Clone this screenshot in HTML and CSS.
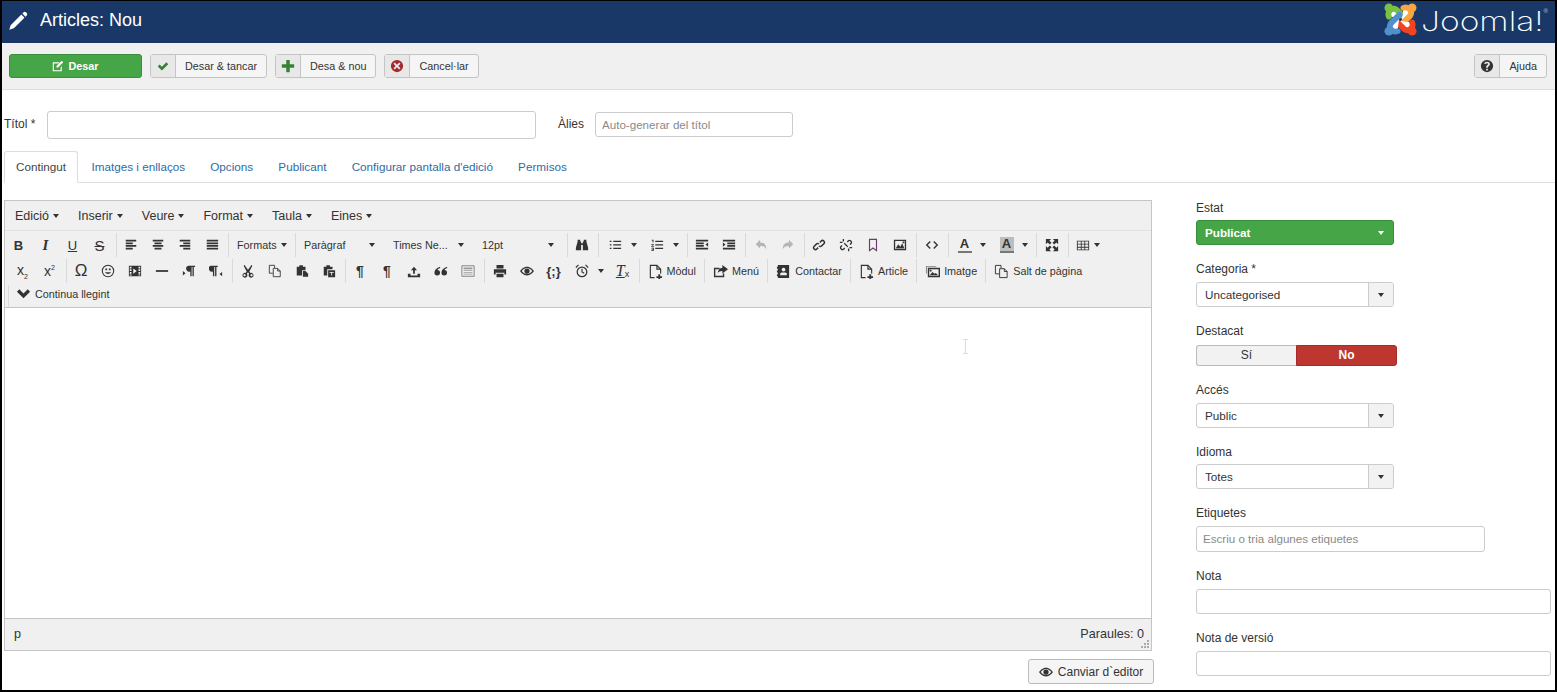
FILE: index.html
```html
<!DOCTYPE html>
<html lang="ca">
  <head>
    <meta charset="UTF-8" />
    <title>Articles: Nou</title>
    <link rel="stylesheet" href="styles.css">
  </head>
  <body>
    <svg class="sprite" width="0" height="0">
      <symbol id="i-left" viewBox="0 0 16 16"><path d="M2 2h12v2H2zM2 5h8v2H2zM2 8h12v2H2zM2 11h8v2H2z"/></symbol>
      <symbol id="i-center" viewBox="0 0 16 16"><path d="M2 2h12v2H2zM4 5h8v2H4zM2 8h12v2H2zM4 11h8v2H4z"/></symbol>
      <symbol id="i-right" viewBox="0 0 16 16"><path d="M2 2h12v2H2zM6 5h8v2H6zM2 8h12v2H2zM6 11h8v2H6z"/></symbol>
      <symbol id="i-justify" viewBox="0 0 16 16"><path d="M2 2h13v2H2zM2 5h13v2H2zM2 8h13v2H2zM2 11h13v2H2z"/></symbol>
      <symbol id="i-binoc" viewBox="0 0 16 16"><path d="M3 2h3v2h1v2h2V4h1V2h3v2l2 7v3H9V8H7v6H1v-3l2-7z"/></symbol>
      <symbol id="i-bullist" viewBox="0 0 16 16"><path d="M6 3h9v1.500H6zM6 7h9v1.500H6zM6 11h9v1.500H6zM2 3h2v1.500H2zM2 7h2v1.500H2zM2 11h2v1.500H2z"/></symbol>
      <symbol id="i-numlist" viewBox="0 0 16 16"><path d="M6 3h9v1.500H6zM6 7h9v1.500H6zM6 11h9v1.500H6zM2 2h2v3H3V3H2zM1.500 7h3v1l-2 1h2v1h-3V9l2-1h-2zM1.500 11h3v3.500h-3v-1h2v-.5h-1v-.5h1v-.5h-2z"/></symbol>
      <symbol id="i-outdent" viewBox="0 0 16 16"><path d="M1 2h14v2H1zM1 5h9v2H1zM1 8h9v2H1zM1 11h14v2H1zM15 5v5l-3-2.500z"/></symbol>
      <symbol id="i-indent" viewBox="0 0 16 16"><path d="M1 2h14v2H1zM6 5h9v2H6zM6 8h9v2H6zM1 11h14v2H1zM1 5v5l3-2.500z"/></symbol>
      <symbol id="i-undo" viewBox="0 0 16 16"><path d="M7 2v3c5 0 7 3 7 8-1.500-3-3-4-7-4v3L2 7z"/></symbol>
      <symbol id="i-redo" viewBox="0 0 16 16"><path d="M9 2v3c-5 0-7 3-7 8 1.500-3 3-4 7-4v3l5-5z"/></symbol>
      <symbol id="i-link" viewBox="0 0 16 16"><path d="M7 11l-1.500 1.500a2 2 0 0 1-3-3L5 7a2 2 0 0 1 3 0M9 5l1.500-1.500a2 2 0 0 1 3 3L11 9a2 2 0 0 1-3 0" fill="none" stroke="currentColor" stroke-width="1.700"/></symbol>
      <symbol id="i-unlink" viewBox="0 0 16 16"><path d="M6.500 11.500l-1 1a2 2 0 0 1-3-3l1-1M9.500 4.500l1-1a2 2 0 0 1 3 3l-1 1M5 1v3M1 5h3M11 15v-3M15 11h-3M6 6l4 4" fill="none" stroke="currentColor" stroke-width="1.500"/></symbol>
      <symbol id="i-bookmark" viewBox="0 0 16 16"><path d="M4 1.500h8v13l-4-3-4 3z" fill="none" stroke="#6b3a6e" stroke-width="1.300"/></symbol>
      <symbol id="i-image" viewBox="0 0 16 16"><path d="M1 2h14v12H1zm1.500 1.500v9h11v-9z"/><path d="M3 12l3-5 2.500 3 2-4 2.500 6zM11 4h2v2h-2z"/></symbol>
      <symbol id="i-code" viewBox="0 0 16 16"><path d="M6 4L2 8l4 4M10 4l4 4-4 4" fill="none" stroke="currentColor" stroke-width="1.600"/></symbol>
      <symbol id="i-full" viewBox="0 0 16 16"><path d="M1 1h6L5 3l2.500 2.500-2 2L3 5 1 7zM15 1v6l-2-2-2.500 2.500-2-2L11 3 9 1zM1 15V9l2 2 2.500-2.500 2 2L5 13l2 2zM15 15H9l2-2-2.500-2.500 2-2L13 11l2-2z"/></symbol>
      <symbol id="i-table" viewBox="0 0 16 16"><path d="M1 3h14v11H1zm1 1v2.500h3.500V4zm4.500 0v2.500h3V4zm4 0v2.500H14V4zM2 7.500V10h3.500V7.500zm4.500 0V10h3V7.500zm4 0V10H14V7.500zM2 11v2h3.500v-2zm4.500 0v2h3v-2zm4 0v2H14v-2z"/></symbol>
      <symbol id="i-smile" viewBox="0 0 16 16"><circle cx="8" cy="8" r="6.500" fill="none" stroke="currentColor" stroke-width="1.200"/><path d="M5 5h2v2H5zM9 5h2v2H9zM4.500 9.500c2 2.500 5 2.500 7 0" fill="currentColor"/></symbol>
      <symbol id="i-media" viewBox="0 0 16 16"><path d="M1 2h14v12H1zm1 1v2h2V3zm0 3v2h2V6zm0 3v2h2V9zm0 3v1h2v-1zM12 3v2h2V3zm0 3v2h2V6zm0 3v2h2V9zm0 3v1h2v-1zM6 5v6l4-3z" fill-rule="evenodd"/></symbol>
      <symbol id="i-hr" viewBox="0 0 16 16"><path d="M1 7h14v2H1z"/></symbol>
      <symbol id="i-ltr" viewBox="0 0 16 16"><path d="M7 2h8v1.500h-1.500V14H12V3.500h-1V14H9.500V8.500A3.300 3.300 0 0 1 7 2zM1 8l3 2.500L1 13z"/></symbol>
      <symbol id="i-rtl" viewBox="0 0 16 16"><path d="M2 2h8v1.500H8.500V14H7V3.500H6V14H4.500V8.500A3.300 3.300 0 0 1 2 2zM15 9v5l-3-2.500z"/></symbol>
      <symbol id="i-cut" viewBox="0 0 16 16"><path d="M4 1l4 5.500L12 1l1 1-3.500 6.500 1.300 1.700a2.800 2.800 0 1 1-1.500 1L8 9.500l-1.300 1.700a2.800 2.800 0 1 1-1.500-1l1.300-1.700L3 2zM4 11.500a1.300 1.300 0 1 0 .1 0zM12 11.500a1.300 1.300 0 1 0 .1 0z" fill-rule="evenodd"/></symbol>
      <symbol id="i-copy" viewBox="0 0 16 16"><path d="M1.500 1.500h6v3M1.500 1.500v9h4M6 5h5l3 3v6.500H6zM11 5v3h3" fill="none" stroke="currentColor"/></symbol>
      <symbol id="i-paste" viewBox="0 0 16 16"><path d="M2 3h3V1.500h4V3h3v4H8v6H2zM9 8h3l3 3v3.500H9z"/></symbol>
      <symbol id="i-pastetext" viewBox="0 0 16 16"><path d="M2 3h3V1.500h4V3h3v3H6v7H2z"/><path d="M7 7h8v8H7zm1.500 2v1h2v3h1v-3h2V9z" fill-rule="evenodd"/></symbol>
      <symbol id="i-upload" viewBox="0 0 16 16"><path d="M8 3l3.500 4H9v4H7V7H4.500zM1 11h3v2h8v-2h3v4H1z"/></symbol>
      <symbol id="i-quote" viewBox="0 0 16 16"><path d="M7 3C3.500 4 .5 6.500.5 10a3.200 3.200 0 1 0 3.300-3.200C4.200 5.800 5.500 5 7 4.500zM15 3c-3.500 1-6.500 3.500-6.500 7a3.200 3.200 0 1 0 3.300-3.200c.4-1 1.700-1.800 3.200-2.300z"/></symbol>
      <symbol id="i-grid" viewBox="0 0 16 16"><path d="M1 2h14v12H1z" fill="none" stroke="#777"/><path d="M3 4h10v2H3zM3 7h10v1H3zM3 9h10v1H3zM3 11h10v1H3z" fill="#999"/></symbol>
      <symbol id="i-print" viewBox="0 0 16 16"><path d="M4 1h8v4H4zM1 6h14v6h-2v-2H3v2H1zM4 11h8v4H4z"/></symbol>
      <symbol id="i-eye" viewBox="0 0 16 16"><path d="M8 3c4 0 6.500 3 8 5-1.500 2-4 5-8 5s-6.500-3-8-5c1.500-2 4-5 8-5zm0 1.500C5.500 4.500 3.500 6 2 8c1.500 2 3.500 3.500 6 3.500s4.500-1.500 6-3.500c-1.500-2-3.500-3.500-6-3.500zM8 5a3 3 0 1 1 0 6 3 3 0 0 1 0-6z" fill-rule="evenodd"/></symbol>
      <symbol id="i-clock" viewBox="0 0 16 16"><circle cx="8" cy="9" r="5.500" fill="none" stroke="currentColor" stroke-width="1.400"/><path d="M8 5.500V9l2.500 1.500M1 4l3-3M15 4l-3-3" fill="none" stroke="currentColor" stroke-width="1.300"/></symbol>
      <symbol id="i-doc" viewBox="0 0 16 16"><path d="M7 14.500H2.500v-13h7l4 4V10M9.500 1.500v4h4" fill="none" stroke="currentColor" stroke-width="1.200"/><path d="M11 11h2v2h2v2h-2v1h-2v-1H9v-2h2z"/></symbol>
      <symbol id="i-share" viewBox="0 0 16 16"><path d="M1 4h6v1.500H2.500v7h8V10H12v4H1zM10 1l6 4.500L10 10V7.500c-3 0-4.500 1-5 3 0-4 2-6 5-6.500z"/></symbol>
      <symbol id="i-contact" viewBox="0 0 16 16"><path d="M2 1h12v14H2zM8 4a2 2 0 1 0 .1 0zM4.500 12h7V9.800L10 9H6l-1.500.8zM1 3h1v2H1zM1 7h1v2H1zM1 11h1v2H1z" fill-rule="evenodd"/></symbol>
      <symbol id="i-images" viewBox="0 0 16 16"><path d="M1 2h11v1H2v7H1z" opacity=".6"/><path d="M3 4h13v10H3zm1.500 1.500v7h10v-7z" fill-rule="evenodd"/><path d="M5 12l3-3.500 2 2 1.500-1 2.500 2.500zM5 6h2v2H5z"/></symbol>
      <symbol id="i-chevron" viewBox="0 0 16 16"><path d="M1 5l2.500-2.500L8 7l4.500-4.500L15 5l-7 7z"/></symbol>
      <symbol id="i-check" viewBox="0 0 16 16"><path d="M1 8.500l2.500-2.500 3 3 6-6L15 5.500 6.500 14z"/></symbol>
      <symbol id="i-plus" viewBox="0 0 16 16"><path d="M6 1h4v5h5v4h-5v5H6v-5H1V6h5z"/></symbol>
      <symbol id="i-cancel" viewBox="0 0 16 16"><path d="M8 1a7 7 0 1 1 0 14A7 7 0 0 1 8 1zM5.500 4L4 5.500 6.500 8 4 10.500 5.500 12 8 9.500l2.500 2.500 1.500-1.500L9.500 8 12 5.500 10.500 4 8 6.500z" fill-rule="evenodd"/></symbol>
      <symbol id="i-help" viewBox="0 0 16 16"><path d="M8 1a7 7 0 1 1 0 14A7 7 0 0 1 8 1zM7 11v2h2v-2zM8 3C6 3 5 4 4.800 5.500l2 .3C7 5 7.300 4.800 8 4.800c.7 0 1.200.4 1.200 1 0 1.200-2.200 1.200-2.200 3.700v.5h2v-.4c0-1.300 2.300-1.600 2.300-3.900C11.300 4 9.800 3 8 3z" fill-rule="evenodd"/></symbol>
      <symbol id="i-edit" viewBox="0 0 16 16"><path d="M1 3h9L8.500 4.500h-6v9h9v-4L13 8v7H1zM13 1l2 2-7 7H6V8z"/></symbol>
      <symbol id="i-pencil" viewBox="0 0 24 24"><path d="M16 4.200l3.800 3.800L7 20.800 1.500 22.500 3.200 17zM17.200 3l1.500-1.500a2 2 0 0 1 2.800 0l1 1a2 2 0 0 1 0 2.800L21 6.800z"/></symbol>
    </svg>

    <div class="page">
      <header class="top-bar">
        <h1 class="page-title">
          <svg class="title-icon"><use href="#i-pencil"></use></svg>
          Articles: Nou
        </h1>
        <div class="brand">
          <svg class="brand-mark" viewBox="0 0 34 34" fill="none" stroke-width="6" stroke-linecap="round">
            <path d="M5 14c-2-5 3-10 8-7l9 9" stroke="#7ac143"/>
            <circle cx="5" cy="5" r="4.500" fill="#7ac143"/>
            <path d="M20 5c5-2 10 3 7 8l-9 9" stroke="#f9a541"/>
            <circle cx="29" cy="5" r="4.500" fill="#f9a541"/>
            <path d="M29 20c2 5-3 10-8 7l-9-9" stroke="#f44321"/>
            <circle cx="29" cy="29" r="4.500" fill="#f44321"/>
            <path d="M14 29c-5 2-10-3-7-8l9-9" stroke="#5091cd"/>
            <circle cx="5" cy="29" r="4.500" fill="#5091cd"/>
          </svg>
          <span class="brand-name">Joomla!</span><span class="brand-reg">®</span>
        </div>
      </header>

      <div class="action-bar">
        <button class="btn btn-save"><svg class="ico-sm"><use href="#i-edit"></use></svg> Desar</button>
        <button class="btn"><span class="btn-icon icon-green"><svg class="ico-sm"><use href="#i-check"></use></svg></span><span class="btn-text">Desar &amp; tancar</span></button>
        <button class="btn"><span class="btn-icon icon-green"><svg class="ico-md"><use href="#i-plus"></use></svg></span><span class="btn-text">Desa &amp; nou</span></button>
        <button class="btn"><span class="btn-icon icon-red"><svg class="ico-md"><use href="#i-cancel"></use></svg></span><span class="btn-text">Cancel·lar</span></button>
        <button class="btn btn-help"><span class="btn-icon"><svg class="ico-md"><use href="#i-help"></use></svg></span><span class="btn-text">Ajuda</span></button>
      </div>

      <main class="content">
        <div class="title-row">
          <label class="title-label">Títol *</label>
          <input class="input input-title" type="text" />
          <label class="alias-label">Àlies</label>
          <input class="input input-alias" type="text" placeholder="Auto-generar del títol" />
        </div>

        <nav class="tabs">
          <a class="tab active">Contingut</a>
          <a class="tab">Imatges i enllaços</a>
          <a class="tab">Opcions</a>
          <a class="tab">Publicant</a>
          <a class="tab">Configurar pantalla d'edició</a>
          <a class="tab">Permisos</a>
        </nav>

        <div class="columns">
          <section class="editor-col">
            <div class="editor">
              <div class="menubar">
                <span class="menu">Edició<i class="caret"></i></span>
                <span class="menu">Inserir<i class="caret"></i></span>
                <span class="menu">Veure<i class="caret"></i></span>
                <span class="menu">Format<i class="caret"></i></span>
                <span class="menu">Taula<i class="caret"></i></span>
                <span class="menu">Eines<i class="caret"></i></span>
              </div>
              <div class="toolbar">
                <div class="tool-row">
                  <div class="group">
                    <span class="tool glyph"><b>B</b></span>
                    <span class="tool glyph glyph-serif"><i>I</i></span>
                    <span class="tool glyph"><u>U</u></span>
                    <span class="tool glyph glyph-strike"><s>S</s></span>
                  </div>
                  <div class="group">
                    <span class="tool"><svg><use href="#i-left"></use></svg></span>
                    <span class="tool"><svg><use href="#i-center"></use></svg></span>
                    <span class="tool"><svg><use href="#i-right"></use></svg></span>
                    <span class="tool"><svg><use href="#i-justify"></use></svg></span>
                  </div>
                  <div class="group">
                    <span class="formats">Formats<i class="caret"></i></span>
                  </div>
                  <div class="group">
                    <span class="listbox lb-para">Paràgraf<i class="caret"></i></span>
                    <span class="listbox lb-font">Times Ne...<i class="caret"></i></span>
                    <span class="listbox lb-size">12pt<i class="caret"></i></span>
                  </div>
                  <div class="group">
                    <span class="tool"><svg><use href="#i-binoc"></use></svg></span>
                  </div>
                  <div class="group">
                    <span class="tool split"><svg><use href="#i-bullist"></use></svg><i class="caret"></i></span>
                    <span class="tool split"><svg><use href="#i-numlist"></use></svg><i class="caret"></i></span>
                  </div>
                  <div class="group">
                    <span class="tool"><svg><use href="#i-outdent"></use></svg></span>
                    <span class="tool"><svg><use href="#i-indent"></use></svg></span>
                  </div>
                  <div class="group">
                    <span class="tool disabled"><svg><use href="#i-undo"></use></svg></span>
                    <span class="tool disabled"><svg><use href="#i-redo"></use></svg></span>
                  </div>
                  <div class="group">
                    <span class="tool"><svg><use href="#i-link"></use></svg></span>
                    <span class="tool"><svg><use href="#i-unlink"></use></svg></span>
                    <span class="tool"><svg><use href="#i-bookmark"></use></svg></span>
                    <span class="tool"><svg><use href="#i-image"></use></svg></span>
                  </div>
                  <div class="group">
                    <span class="tool"><svg><use href="#i-code"></use></svg></span>
                  </div>
                  <div class="group">
                    <span class="tool split glyph"><span class="color-a">A</span><i class="caret"></i></span>
                    <span class="tool split glyph"><span class="color-a color-bg">A</span><i class="caret"></i></span>
                  </div>
                  <div class="group">
                    <span class="tool"><svg><use href="#i-full"></use></svg></span>
                  </div>
                  <div class="group group-last">
                    <span class="tool split-tight"><svg><use href="#i-table"></use></svg><i class="caret"></i></span>
                  </div>
                </div>

                <div class="tool-row tool-row-second">
                  <div class="group">
                    <span class="tool glyph glyph-x"><span>x<sub>2</sub></span></span>
                    <span class="tool glyph glyph-x"><span>x<sup>2</sup></span></span>
                  </div>
                  <div class="group">
                    <span class="tool glyph glyph-omega">Ω</span>
                    <span class="tool"><svg><use href="#i-smile"></use></svg></span>
                    <span class="tool"><svg><use href="#i-media"></use></svg></span>
                    <span class="tool"><svg><use href="#i-hr"></use></svg></span>
                    <span class="tool"><svg><use href="#i-ltr"></use></svg></span>
                    <span class="tool"><svg><use href="#i-rtl"></use></svg></span>
                  </div>
                  <div class="group">
                    <span class="tool"><svg><use href="#i-cut"></use></svg></span>
                    <span class="tool"><svg><use href="#i-copy"></use></svg></span>
                    <span class="tool"><svg><use href="#i-paste"></use></svg></span>
                    <span class="tool"><svg><use href="#i-pastetext"></use></svg></span>
                  </div>
                  <div class="group">
                    <span class="tool glyph glyph-para">¶</span>
                    <span class="tool glyph glyph-para">¶</span>
                    <span class="tool"><svg><use href="#i-upload"></use></svg></span>
                    <span class="tool"><svg><use href="#i-quote"></use></svg></span>
                    <span class="tool"><svg><use href="#i-grid"></use></svg></span>
                  </div>
                  <div class="group">
                    <span class="tool"><svg><use href="#i-print"></use></svg></span>
                    <span class="tool"><svg><use href="#i-eye"></use></svg></span>
                    <span class="tool glyph glyph-brace">{;}</span>
                    <span class="tool split"><svg><use href="#i-clock"></use></svg><i class="caret"></i></span>
                    <span class="tool glyph glyph-tx"><u><i>T</i></u><small>x</small></span>
                  </div>
                  <div class="group"><span class="xtd"><svg><use href="#i-doc"></use></svg>Mòdul</span></div>
                  <div class="group"><span class="xtd"><svg><use href="#i-share"></use></svg>Menú</span></div>
                  <div class="group"><span class="xtd"><svg><use href="#i-contact"></use></svg>Contactar</span></div>
                  <div class="group"><span class="xtd"><svg><use href="#i-doc"></use></svg>Article</span></div>
                  <div class="group"><span class="xtd"><svg><use href="#i-images"></use></svg>Imatge</span></div>
                  <div class="group group-last"><span class="xtd"><svg><use href="#i-copy"></use></svg>Salt de pàgina</span></div>
                </div>

                <div class="tool-row tool-row-last">
                  <span class="xtd xtd-first"><svg><use href="#i-chevron"></use></svg>Continua llegint</span>
                </div>
              </div>
              <div class="edit-area"></div>
              <div class="statusbar">
                <span>p</span>
                <span>Paraules: 0</span>
                <svg class="resize-grip" viewBox="0 0 8 8"><path d="M6 0h2v2H6zM6 3h2v2H6zM6 6h2v2H6zM3 3h2v2H3zM3 6h2v2H3zM0 6h2v2H0z"/></svg>
              </div>
            </div>
            <div class="editor-foot">
              <button class="btn-switch"><svg class="ico-md"><use href="#i-eye"></use></svg>Canviar d`editor</button>
            </div>
          </section>

          <aside class="sidebar">
            <div class="field field-short">
              <label>Estat</label>
              <div class="chzn chzn-green"><span>Publicat</span><i class="caret"></i></div>
            </div>
            <div class="field">
              <label>Categoria *</label>
              <div class="chzn"><span>Uncategorised</span><b class="chzn-arrow"><i class="caret"></i></b></div>
            </div>
            <div class="field field-toggle">
              <label>Destacat</label>
              <div class="toggle"><span class="toggle-yes">Sí</span><span class="toggle-no">No</span></div>
            </div>
            <div class="field">
              <label>Accés</label>
              <div class="chzn"><span>Public</span><b class="chzn-arrow"><i class="caret"></i></b></div>
            </div>
            <div class="field field-short">
              <label>Idioma</label>
              <div class="chzn"><span>Totes</span><b class="chzn-arrow"><i class="caret"></i></b></div>
            </div>
            <div class="field field-tags">
              <label>Etiquetes</label>
              <input class="input input-tags" type="text" placeholder="Escriu o tria algunes etiquetes" />
            </div>
            <div class="field">
              <label>Nota</label>
              <input class="input input-wide" type="text" />
            </div>
            <div class="field">
              <label>Nota de versió</label>
              <input class="input input-wide" type="text" />
            </div>
          </aside>
        </div>
      </main>

      <svg class="text-cursor" viewBox="0 0 7 15"><path d="M1 .5h5M3.500.5v14M1 14.500h5" fill="none" stroke="#dcdcdc"/></svg>
    </div>
  </body>
</html>
```

FILE: styles.css
```css
* {
  box-sizing: border-box;
}
html,
body {
  margin: 0;
  height: 100%;
  overflow: hidden;
}
body {
  font-family: "Liberation Sans", Arial, sans-serif;
  font-size: 12px;
  color: #333;
  background-color: #000;
}
.sprite {
  position: absolute;
}
svg {
  fill: currentColor;
}
.page {
  position: relative;
  height: 689px;
  width: 1553px;
  margin: 1px 0 0 2px;
  background-color: white;
  overflow: hidden;
}

/* header */
.top-bar {
  display: flex;
  justify-content: space-between;
  height: 42px;
  background-color: #1a3867;
  color: white;
}
.page-title {
  display: flex;
  align-items: center;
  margin: 0;
  padding: 0 0 3px 6px;
  font-size: 18px;
  font-weight: normal;
}
.title-icon {
  width: 20px;
  height: 20px;
  margin-right: 12px;
}
.brand {
  display: flex;
  align-items: flex-start;
  padding: 2px 7px 0 0;
}
.brand-mark {
  width: 33px;
  height: 33px;
  margin-right: 4px;
}
.brand-name {
  width: 123px;
  font-family: Inter, sans-serif;
  font-size: 26.5px;
  font-weight: 200;
  line-height: 36px;
  transform: scaleX(1.27);
  transform-origin: left center;
}
.brand-reg {
  font-size: 6px;
  margin-top: 5px;
  color: #ccc;
}

/* action buttons */
.action-bar {
  display: flex;
  gap: 8px;
  height: 47px;
  padding: 11px 8px 0 7px;
  background-color: #f0f0f0;
  border-bottom: 1px solid #dedede;
}
.btn {
  display: flex;
  align-items: stretch;
  height: 24px;
  padding: 0;
  font-family: inherit;
  font-size: 10.8px;
  color: #333;
  background-color: #f5f5f5;
  border: 1px solid #c4c4c4;
  border-radius: 3px;
}
.btn-icon {
  display: flex;
  align-items: center;
  justify-content: center;
  width: 25px;
  background-color: #e8e8e8;
  border-right: 1px solid #c4c4c4;
}
.btn-text {
  display: flex;
  align-items: center;
  padding: 0 9px;
}
.btn-save {
  align-items: center;
  justify-content: center;
  gap: 4px;
  width: 133px;
  font-weight: bold;
  color: white;
  background-color: #46a546;
  border-color: #388e3c;
}
.btn-help {
  margin-left: auto;
}
.icon-green {
  color: #378137;
}
.icon-red {
  color: #a52a2a;
}
.ico-sm {
  width: 12px;
  height: 12px;
}
.ico-md {
  width: 14px;
  height: 14px;
}

/* title */
.content {
  padding: 21px 0 0 2px;
}
.title-row {
  display: flex;
  align-items: center;
  height: 28px;
}
.title-label {
  width: 43px;
  padding-bottom: 2px;
}
.alias-label {
  margin: 0 11px 0 22px;
  padding-bottom: 2px;
}
.input {
  height: 25px;
  padding: 0 6px;
  font-family: inherit;
  font-size: 11.6px;
  color: #333;
  background-color: white;
  border: 1px solid #ccc;
  border-radius: 3px;
}
.input::placeholder {
  color: #8a8a8a;
}
.input-title {
  width: 489px;
  height: 28px;
}
.input-alias {
  width: 198px;
  margin-bottom: 1px;
}

/* tabs */
.tabs {
  display: flex;
  height: 32px;
  margin-top: 12px;
  font-size: 11.7px;
  border-bottom: 1px solid #ddd;
}
.tab {
  height: 32px;
  padding: 9px 12px 0;
  margin-right: 1.2px;
  color: #2f6ba5;
}
.tab.active {
  color: #444;
  background-color: white;
  border: 1px solid #ddd;
  border-bottom-color: white;
  border-radius: 3px 3px 0 0;
  padding: 8px 11px 0;
  margin-right: 1.5px;
}

/* editor */
.columns {
  display: flex;
  margin-top: 17px;
}
.editor-col {
  width: 1148px;
}
.editor {
  height: 451px;
  display: flex;
  flex-direction: column;
  border: 1px solid #c5c5c5;
}
.menubar {
  display: flex;
  align-items: center;
  gap: 0;
  height: 30px;
  padding-left: 1px;
  font-size: 12.5px;
  background-color: #f0f0f0;
  border-bottom: 1px solid #e2e2e2;
}
.menu {
  display: flex;
  align-items: center;
  padding: 0 10px 0 9px;
}
.caret {
  display: inline-block;
  width: 0;
  height: 0;
  margin-left: 4px;
  border-top: 4px solid #333;
  border-left: 3.5px solid transparent;
  border-right: 3.5px solid transparent;
}
.toolbar {
  height: 77px;
  padding: 2px 0 0 0;
  background-color: #f0f0f0;
  border-bottom: 1px solid #c5c5c5;
}
.tool-row {
  display: flex;
  height: 26px;
  font-size: 10.8px;
}
.tool-row-second {
  padding-left: 4px;
}
.tool-row-last {
  height: 22px;
  padding-left: 3px;
}
.group {
  display: flex;
  align-items: center;
  height: 24px;
  padding: 0 2.5px 0 0;
  margin-right: 1px;
  border-right: 1px solid #d9d9d9;
}
.group-last {
  border-right: none;
}
.tool {
  display: flex;
  align-items: center;
  justify-content: center;
  width: 27px;
  height: 24px;
}
.tool svg {
  width: 14px;
  height: 14px;
}
.tool.disabled {
  color: #b5b5b5;
}
.tool.split {
  width: 42px;
  justify-content: flex-start;
  padding-left: 8px;
}
.split .caret {
  margin-left: 8.5px;
}
.tool.split-tight {
  justify-content: flex-start;
  width: 36px;
  padding-left: 6px;
}
.split-tight .caret {
  margin-left: 4px;
}
.glyph {
  font-size: 13px;
}
.glyph-serif {
  font-family: "Liberation Serif", serif;
  font-size: 15px;
  font-weight: bold;
}
.glyph-strike {
  font-size: 15px;
}
.glyph-x {
  font-size: 14px;
}
.glyph-x sub,
.glyph-x sup {
  font-size: 7px;
}
.glyph-omega {
  font-size: 17px;
}
.glyph-para {
  font-size: 14px;
  font-weight: bold;
}
.glyph-brace {
  font-size: 13px;
  font-weight: bold;
}
.glyph-tx {
  font-family: "Liberation Serif", serif;
  font-size: 16px;
}
.glyph-tx small {
  font-family: "Liberation Sans", sans-serif;
  font-size: 9px;
  margin-top: 5px;
}
.color-a {
  display: inline-block;
  width: 14px;
  height: 16px;
  line-height: 13px;
  text-align: center;
  font-weight: bold;
  border-bottom: 2px solid #777;
}
.color-bg {
  background-color: #bdbdbd;
}
.formats {
  display: flex;
  align-items: center;
  width: 62.5px;
  padding-left: 7px;
}
.listbox {
  display: flex;
  align-items: center;
  justify-content: space-between;
  padding: 0 10px 0 8px;
}
.lb-para {
  width: 88px;
  padding-left: 7px;
}
.lb-font {
  width: 89px;
}
.lb-size {
  width: 90px;
}
.xtd {
  display: flex;
  align-items: center;
  padding: 0 5.6px 0 7px;
}
.xtd svg {
  width: 15px;
  height: 15px;
  margin-right: 4px;
}
.xtd-first {
  padding: 0 0 4px 7px;
  border-left: 1px solid #d9d9d9;
}
.edit-area {
  flex: 1;
  background-color: white;
}
.statusbar {
  position: relative;
  display: flex;
  align-items: center;
  justify-content: space-between;
  height: 32px;
  padding: 0 7px 2px 9px;
  font-size: 12.6px;
  background-color: #f0f0f0;
  border-top: 1px solid #c5c5c5;
}
.resize-grip {
  position: absolute;
  right: 2px;
  bottom: 2px;
  width: 8px;
  height: 8px;
  color: #aaa;
}
.editor-foot {
  display: flex;
  justify-content: flex-end;
  margin: 8px -2px 0 0;
}
.btn-switch {
  display: flex;
  align-items: center;
  justify-content: center;
  gap: 5px;
  width: 126px;
  height: 25px;
  font-family: inherit;
  font-size: 12px;
  color: #333;
  background-color: #f5f5f5;
  border: 1px solid #bbb;
  border-radius: 3px;
}

/* sidebar */
.sidebar {
  margin-left: 44px;
  margin-top: -1px;
}
.field {
  height: 62px;
}
.field label {
  display: block;
  height: 22px;
  line-height: 18px;
}
.field-short {
  height: 61px;
}
.field-short .chzn {
  margin-top: -1px;
}
.field-toggle {
  height: 59px;
}
.field-tags {
  height: 63px;
}
.chzn {
  display: flex;
  align-items: center;
  justify-content: space-between;
  width: 198px;
  height: 25px;
  padding-left: 8px;
  font-size: 11.7px;
  background-color: white;
  border: 1px solid #ccc;
  border-radius: 3px;
}
.chzn-green {
  padding-right: 9px;
  font-weight: bold;
  color: white;
  background-color: #46a546;
  border-color: #388e3c;
}
.chzn-green .caret {
  border-top-color: white;
}
.chzn-arrow {
  display: flex;
  align-items: center;
  justify-content: center;
  width: 25px;
  height: 23px;
  background-color: #f2f2f2;
  border-left: 1px solid #ccc;
  border-radius: 0 3px 3px 0;
}
.chzn-arrow .caret {
  margin: 0;
}
.toggle {
  display: flex;
  width: 201px;
  height: 21px;
  margin-top: 1px;
  line-height: 19px;
  text-align: center;
}
.toggle-yes {
  width: 100px;
  background-color: #f2f2f2;
  border: 1px solid #bbb;
  border-right: none;
  border-radius: 3px 0 0 3px;
}
.toggle-no {
  flex: 1;
  font-weight: bold;
  color: white;
  background-color: #bd362f;
  border: 1px solid #a52a2a;
  border-radius: 0 3px 3px 0;
}
.input-tags {
  width: 289px;
  height: 26px;
  padding-bottom: 2px;
}
.input-wide {
  width: 355px;
}

/* i-beam left over the edit area */
.text-cursor {
  position: absolute;
  left: 960px;
  top: 338px;
  width: 7px;
  height: 15px;
}
```
